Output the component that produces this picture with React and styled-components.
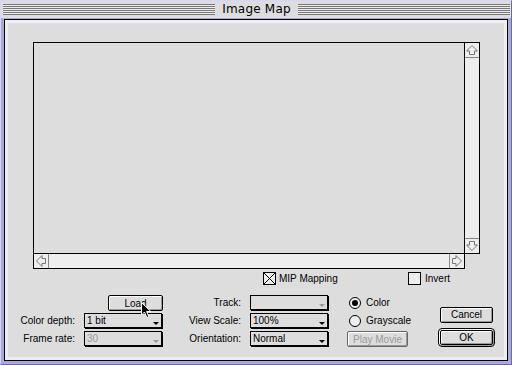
import React from "react";
import styled, { createGlobalStyle } from "styled-components";

const Global = createGlobalStyle`
  html, body { margin: 0; padding: 0; background: #fff; }
  body {
    font-family: "Liberation Sans", Arial, sans-serif;
    font-size: 10px;
    color: #000;
  }
  * { box-sizing: border-box; }
`;

const Window = styled.div`
  width: 512px;
  height: 365px;
  border: 1px solid;
  border-color: #d4d4ff #6b6ba3 #6b6ba3 #d4d4ff;
  background: #a9a9dc;
  padding: 0 3px 3px;
  display: flex;
  flex-direction: column;
`;

const TitleBar = styled.div`
  height: 17px;
  margin: 0 -3px 1px;
  padding: 0 1px 0 2px;
  background: #dddddd;
  display: flex;
  align-items: center;
`;

const Stripes = styled.div`
  flex: 1;
  height: 11px;
  background: repeating-linear-gradient(to bottom, #777 0 1px, #eee 1px 2px);
`;

const Title = styled.div`
  padding: 0 7px;
  font-family: "DejaVu Sans", sans-serif;
  font-size: 12px;
  line-height: 17px;
  letter-spacing: 0.2px;
`;

const Frame = styled.div`
  flex: 1;
  border: 1px solid #000;
  padding: 3px;
  background: #eeeeee;
  display: flex;
`;

const Content = styled.div`
  flex: 1;
  background: #dddddd;
  padding-top: 19px;
  display: flex;
  flex-direction: column;
`;

const ImageFrame = styled.div`
  margin-left: 25px;
  display: grid;
  grid-template-columns: 432px 15px;
  grid-template-rows: 212px 15px;
`;

const ImageArea = styled.div`
  border: 1px solid #000;
  background: #dddddd;
`;

const VScroll = styled.div`
  border: 1px solid #000;
  border-left: none;
  background: #eeeeee;
  display: flex;
  flex-direction: column;
  justify-content: space-between;
`;

const HScroll = styled.div`
  border: 1px solid #000;
  border-top: none;
  background: #eeeeee;
  display: flex;
  justify-content: space-between;
`;

const ArrowBox = styled.div`
  width: 14px;
  height: 14px;
  display: flex;
  ${(p) => p.$edge === "bottom" && "border-bottom: 1px solid #888; height: 15px;"}
  ${(p) => p.$edge === "top" && "border-top: 1px solid #888; height: 15px;"}
  ${(p) => p.$edge === "right" && "border-right: 1px solid #888; width: 15px;"}
  ${(p) => p.$edge === "left" && "border-left: 1px solid #888; width: 15px;"}
`;

const rot = { up: 0, right: 90, down: 180, left: 270 };

function Arrow({ dir, edge }) {
  return (
    <ArrowBox $edge={edge}>
      <svg width="14" height="14" viewBox="0 0 14 14">
        <g transform={`rotate(${rot[dir]} 7 7)`}>
          <polygon
            points="7,2.5 12.5,8 9.5,8 9.5,11.5 4.5,11.5 4.5,8 1.5,8"
            fill="none"
            stroke="#777"
            strokeWidth="1"
          />
        </g>
      </svg>
    </ArrowBox>
  );
}

const OptionsRow = styled.div`
  margin-top: 3px;
  padding-left: 255px;
  display: grid;
  grid-template-columns: 145px auto;
  height: 13px;
`;

const CheckItem = styled.label`
  display: flex;
  align-items: center;
  gap: ${(p) => p.$gap || 4}px;
  line-height: 13px;
`;

const Box = styled.span`
  width: 13px;
  height: 13px;
  border: 1px solid #000;
  background: #eeeeee;
  display: block;
`;

function CheckBox({ checked }) {
  return (
    <Box>
      {checked && (
        <svg width="11" height="11" viewBox="0 0 11 11" style={{ display: "block" }}>
          <path d="M0 0 L11 11 M11 0 L0 11" stroke="#000" strokeWidth="1" />
        </svg>
      )}
    </Box>
  );
}

const Controls = styled.div`
  margin-top: 10px;
  display: grid;
  grid-template-columns: 67px 79px 69px 79px 91px 57px;
  grid-template-rows: repeat(3, 16px);
  column-gap: 9px;
  row-gap: 2px;
`;

const Label = styled.div`
  text-align: right;
  line-height: 16px;
  white-space: nowrap;
`;

const Popup = styled.div`
  width: 78px;
  height: 15px;
  border: 1px solid #000;
  box-shadow: 1px 1px 0 #000;
  background: #dddddd;
  padding: 0 2px 0 2px;
  display: flex;
  justify-content: space-between;
  line-height: 13px;
  color: ${(p) => (p.$disabled ? "#999" : "#000")};
`;

const Tri = styled.span`
  align-self: flex-end;
  margin-bottom: 2px;
  width: 0;
  height: 0;
  border-left: 3px solid transparent;
  border-right: 3px solid transparent;
  border-top: 3px solid ${(p) => (p.$disabled ? "#999" : "#000")};
`;

function PopupMenu({ value, disabled }) {
  return (
    <Popup $disabled={disabled}>
      <span>{value}</span>
      <Tri $disabled={disabled} />
    </Popup>
  );
}

const Button = styled.button`
  font: inherit;
  font-size: 10px;
  width: ${(p) => p.$w || 55}px;
  height: 16px;
  padding: 0;
  border: 1px solid ${(p) => (p.disabled ? "#666" : "#000")};
  border-radius: 2px;
  background: #dddddd;
  color: ${(p) => (p.disabled ? "#999" : "#000")};
  box-shadow: inset 1px 1px 0 #fff, inset -1px -1px 0 #999;
  line-height: 13px;
`;

const LoadCell = styled.div`
  justify-self: end;
  position: relative;
`;

const Cursor = styled.svg`
  position: absolute;
  left: 33px;
  top: 7px;
`;

const RadioItem = styled.div`
  display: flex;
  align-items: center;
  gap: 5px;
  padding-left: 11px;
  line-height: 16px;
`;

const Circle = styled.span`
  width: 12px;
  height: 12px;
  border: 1px solid #000;
  border-radius: 50%;
  background: #eeeeee;
  display: flex;
  align-items: center;
  justify-content: center;
  &::after {
    content: "";
    display: ${(p) => (p.$on ? "block" : "none")};
    width: 6px;
    height: 6px;
    border-radius: 50%;
    background: #000;
  }
`;

const PlayCell = styled.div`
  padding-left: 9px;
`;

const ButtonColumn = styled.div`
  grid-column: 6;
  grid-row: 1 / span 3;
  padding-top: 12px;
  display: flex;
  flex-direction: column;
  align-items: center;
  gap: 5px;
`;

const DefaultRing = styled.div`
  width: 57px;
  height: 20px;
  border: 1px solid #000;
  border-radius: 4px;
  padding: 1px;
  background: #dddddd;
  box-shadow: inset 1px 1px 0 #fff, inset -1px -1px 0 #999;
  display: flex;
  & > button {
    width: 100%;
    height: 100%;
  }
`;

export default function App() {
  return (
    <>
      <Global />
      <Window>
        <TitleBar>
          <Stripes />
          <Title>Image Map</Title>
          <Stripes />
        </TitleBar>
        <Frame>
          <Content>
            <ImageFrame>
              <ImageArea />
              <VScroll>
                <Arrow dir="up" edge="bottom" />
                <Arrow dir="down" edge="top" />
              </VScroll>
              <HScroll>
                <Arrow dir="left" edge="right" />
                <Arrow dir="right" edge="left" />
              </HScroll>
            </ImageFrame>

            <OptionsRow>
              <CheckItem $gap={3}>
                <CheckBox checked />
                MIP Mapping
              </CheckItem>
              <CheckItem>
                <CheckBox />
                Invert
              </CheckItem>
            </OptionsRow>

            <Controls>
              <div />
              <LoadCell>
                <Button>Load</Button>
                <Cursor width="11" height="17" viewBox="0 0 11 17">
                  <path
                    d="M0.5 0.5 L0.5 13 L3.5 10 L5.8 15.5 L7.8 14.6 L5.6 9.5 L9.8 9.5 Z"
                    fill="#000"
                    stroke="#fff"
                    strokeWidth="1"
                  />
                </Cursor>
              </LoadCell>
              <Label>Track:</Label>
              <PopupMenu value="" disabled />
              <RadioItem>
                <Circle $on />
                Color
              </RadioItem>
              <ButtonColumn>
                <Button $w={53}>Cancel</Button>
                <DefaultRing>
                  <Button>OK</Button>
                </DefaultRing>
              </ButtonColumn>

              <Label>Color depth:</Label>
              <PopupMenu value="1 bit" />
              <Label>View Scale:</Label>
              <PopupMenu value="100%" />
              <RadioItem>
                <Circle />
                Grayscale
              </RadioItem>

              <Label>Frame rate:</Label>
              <PopupMenu value="30" disabled />
              <Label>Orientation:</Label>
              <PopupMenu value="Normal" />
              <PlayCell>
                <Button $w={61} disabled>
                  Play Movie
                </Button>
              </PlayCell>
            </Controls>
          </Content>
        </Frame>
      </Window>
    </>
  );
}
